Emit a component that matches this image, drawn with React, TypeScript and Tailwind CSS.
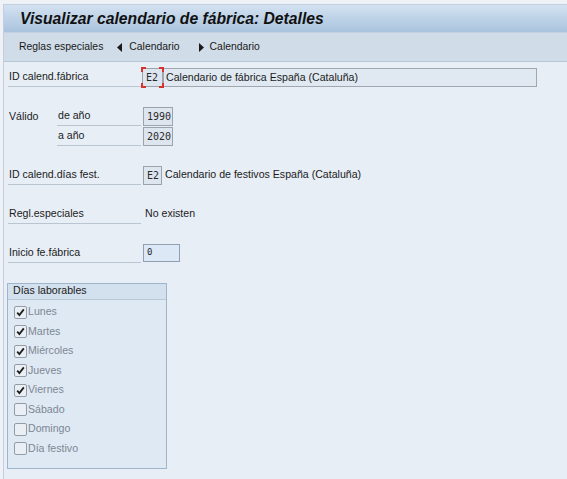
import React from "react";

const ui = "font-['Liberation_Sans',Tahoma,sans-serif]";
const mono = "font-['DejaVu_Sans_Mono','Liberation_Mono',monospace]";

function Label({ text, className = "" }: { text: string; className?: string }) {
  return (
    <div
      className={`flex h-full items-center border-b border-[#b9c5d1] pl-[1px] text-[10.6px] text-[#1b1b1b] ${className}`}
    >
      {text}
    </div>
  );
}

function Field({
  value,
  width,
  focused = false,
  className = "",
}: {
  value: string;
  width: string;
  focused?: boolean;
  className?: string;
}) {
  return (
    <div
      className={`relative flex h-[19px] items-center border border-[#9ba4ad] bg-[#dde6ef] px-[3px] text-[10px] text-[#2a2a2a] ${mono} ${width} ${className}`}
    >
      {value}
      {focused && (
        <>
          <span className="absolute -left-[2px] -top-[2px] h-[5px] w-[5px] border-l-2 border-t-2 border-[#d6332f]" />
          <span className="absolute -right-[2px] -top-[2px] h-[5px] w-[5px] border-r-2 border-t-2 border-[#d6332f]" />
          <span className="absolute -bottom-[2px] -left-[2px] h-[5px] w-[5px] border-b-2 border-l-2 border-[#d6332f]" />
          <span className="absolute -bottom-[2px] -right-[2px] h-[5px] w-[5px] border-b-2 border-r-2 border-[#d6332f]" />
        </>
      )}
    </div>
  );
}

function Check({ label, checked }: { label: string; checked: boolean }) {
  return (
    <div className="flex h-[19.5px] items-center">
      <div className="flex h-[13px] w-[13px] items-center justify-center rounded-[2px] border border-[#939ca6] bg-[#e9eff5]">
        {checked && (
          <svg width="9" height="9" viewBox="0 0 9 9">
            <path d="M1.2 4.6 3.4 7 7.8 1.4" fill="none" stroke="#1e1e1e" strokeWidth="1.8" />
          </svg>
        )}
      </div>
      <span className="ml-[1px] text-[10.6px] text-[#7d8792]">{label}</span>
    </div>
  );
}

function Arrow({ dir }: { dir: "left" | "right" }) {
  return (
    <svg width="5" height="9" viewBox="0 0 5 9">
      <path d={dir === "left" ? "M5 0 0 4.5 5 9Z" : "M0 0 5 4.5 0 9Z"} fill="#1a1a1a" />
    </svg>
  );
}

const days: [string, boolean][] = [
  ["Lunes", true],
  ["Martes", true],
  ["Miércoles", true],
  ["Jueves", true],
  ["Viernes", true],
  ["Sábado", false],
  ["Domingo", false],
  ["Día festivo", false],
];

export default function App() {
  return (
    <div className={`h-[479px] w-[567px] overflow-hidden bg-[#eef2f7] pl-[3px] pt-[4px] ${ui}`}>
      <div className="flex h-full flex-col border-l border-t border-[#c3cfdb] bg-[#e7eef6]">
        <div className="flex h-[27px] shrink-0 items-center bg-gradient-to-b from-[#d3e2f1] to-[#a9c3de] pl-[16px]">
          <h1 className="text-[15.7px] font-bold italic text-[#111]">
            Visualizar calendario de fábrica: Detalles
          </h1>
        </div>
        <div className="flex h-[30px] shrink-0 items-center border-b border-t border-b-[#b7c7d7] border-t-[#c2d2e2] bg-[#d0dde8] pl-[15px] text-[10.4px] text-[#1a1a1a]">
          <span>Reglas especiales</span>
          <span className="ml-[14px] flex items-center">
            <Arrow dir="left" />
          </span>
          <span className="ml-[7px]">Calendario</span>
          <span className="ml-[19px] flex items-center">
            <Arrow dir="right" />
          </span>
          <span className="ml-[6px]">Calendario</span>
        </div>

        <div className="flex flex-col pl-[4px] pt-[6px]">
          <div className="flex h-[19.5px] items-start">
            <div className="h-[19px] w-[133px]">
              <Label text="ID calend.fábrica" />
            </div>
            <Field value="E2" width="w-[21px]" focused className="ml-[1px]" />
            <div className="flex h-[19px] w-[374px] items-center border border-[#a1a7ae] bg-[#e0e9f2] pl-[2px] text-[10.6px] text-[#1b1b1b]">
              Calendario de fábrica España (Cataluña)
            </div>
          </div>
          <div className="h-[19.5px]" />
          <div className="flex h-[19.5px] items-start">
            <div className="flex h-[19px] w-[49px] items-center pl-[1px] text-[10.6px] text-[#1b1b1b]">Válido</div>
            <div className="h-[19px] w-[84px]">
              <Label text="de año" />
            </div>
            <Field value="1990" width="w-[30px]" className="ml-[2px]" />
          </div>
          <div className="flex h-[19.5px] items-start">
            <div className="w-[49px]" />
            <div className="h-[19px] w-[84px]">
              <Label text="a año" />
            </div>
            <Field value="2020" width="w-[30px]" className="ml-[2px]" />
          </div>
          <div className="h-[19.5px]" />
          <div className="flex h-[19.5px] items-start">
            <div className="h-[19px] w-[133px]">
              <Label text="ID calend.días fest." />
            </div>
            <Field value="E2" width="w-[19px]" className="ml-[2px]" />
            <span className="ml-[3px] flex h-[19px] items-center text-[10.6px] text-[#1b1b1b]">
              Calendario de festivos España (Cataluña)
            </span>
          </div>
          <div className="h-[19.5px]" />
          <div className="flex h-[19.5px] items-start">
            <div className="h-[19px] w-[133px]">
              <Label text="Regl.especiales" />
            </div>
            <span className="ml-[4px] flex h-[19px] items-center text-[10.6px] text-[#1b1b1b]">No existen</span>
          </div>
          <div className="h-[19.5px]" />
          <div className="flex h-[19.5px] items-start">
            <div className="h-[19px] w-[133px]">
              <Label text="Inicio fe.fábrica" />
            </div>
            <div
              className={`ml-[2px] flex h-[18px] w-[37px] items-center border border-[#8fa0b2] bg-[#dce8f5] pl-[3px] text-[9px] text-[#2a2a2a] ${mono}`}
            >
              0
            </div>
          </div>
          <div className="h-[19.5px]" />

          <div className="-ml-[1px] flex h-[186px] w-[160px] flex-col border border-[#9fb5cc] bg-[#dfe9f4]">
            <div className="flex h-[16px] items-center border-b border-[#b6c8da] bg-[#d3e0ed] pl-[5px] text-[10.6px] text-[#1b1b1b]">
              Días laborables
            </div>
            <div className="flex flex-col pl-[6px] pt-[3px]">
              {days.map(([d, c]) => (
                <Check key={d} label={d} checked={c} />
              ))}
            </div>
          </div>
        </div>
      </div>
    </div>
  );
}
